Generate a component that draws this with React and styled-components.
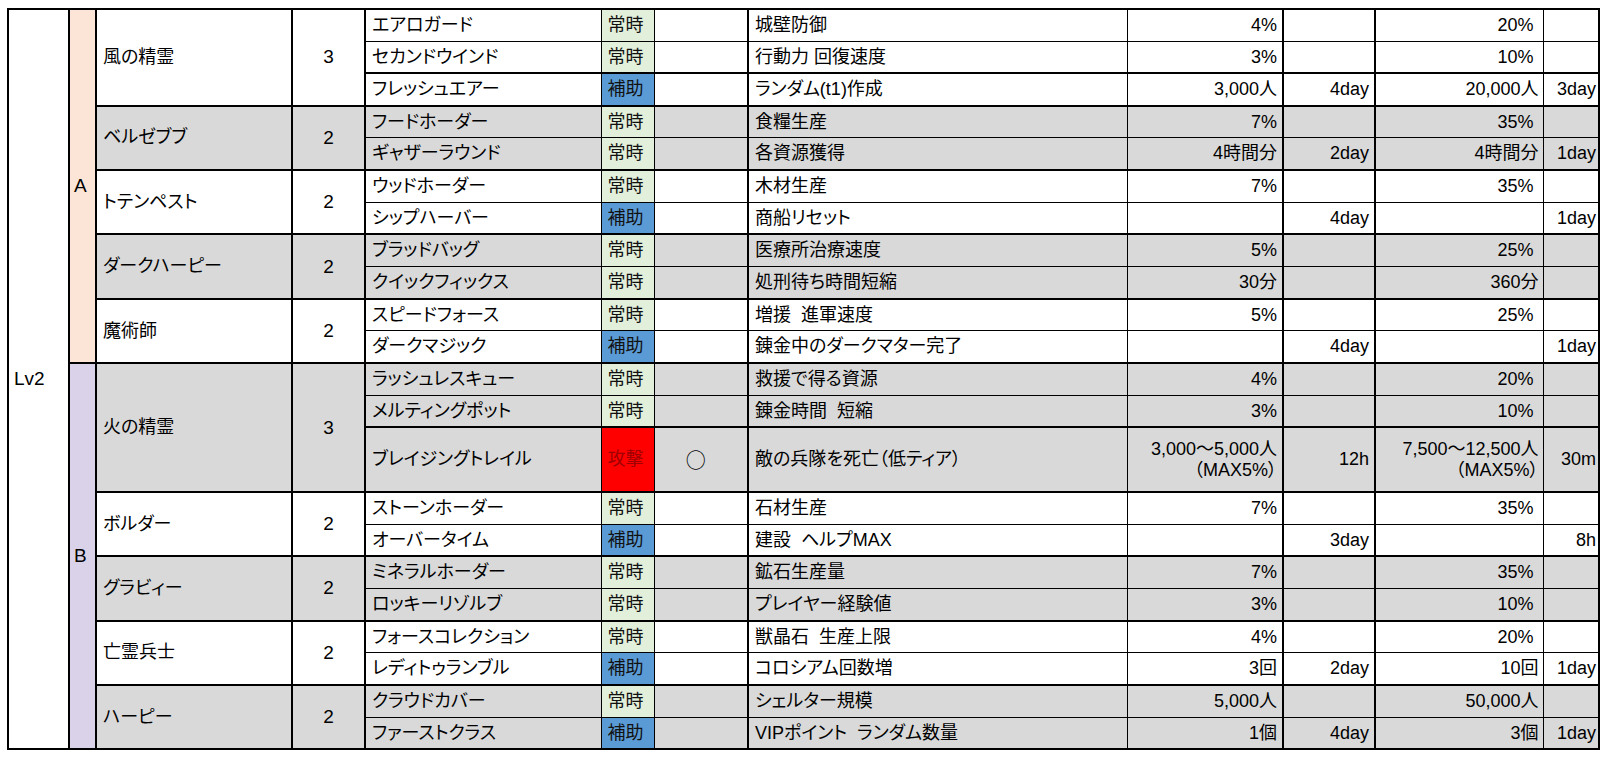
import React from 'react';
import styled, { createGlobalStyle } from 'styled-components';

const GlobalStyle = createGlobalStyle`
  html, body {
    margin: 0;
    padding: 0;
    background: #ffffff;
    overflow: hidden;
  }
  body { font-family: "Liberation Sans", "Noto Sans CJK JP", sans-serif; color: #000; }
`;

const Page = styled.div`
  box-sizing: border-box;
  width: 1603px;
  height: 758px;
  overflow: hidden;
  padding: 8px 0 0 7px;
`;

const Sheet = styled.table`
  border-collapse: collapse;
  table-layout: fixed;
  width: 1591px;
  font-family: "Liberation Sans", "Noto Sans CJK JP", sans-serif;
  font-size: 18px;
  font-feature-settings: "palt";
  color: #000;
  border: 2px solid #000;
`;

const Col = styled.col`
  width: ${(p) => p.$w}px;
`;

const Row = styled.tr`
  height: ${(p) => (p.$tall ? 64.4 : 32.2)}px;
`;

const BaseCell = styled.td`
  box-sizing: border-box;
  vertical-align: middle;
  white-space: pre;
  overflow: hidden;
  line-height: 1.15;
  padding: 0 5px;
  border-top: ${(p) => p.$top || 1}px solid #000;
  border-bottom: 1px solid #000;
  background: ${(p) => (p.$shade ? '#d9d9d9' : '#ffffff')};
`;

const LevelCell = styled(BaseCell)`
  border-right: 2px solid #000;
  background: #ffffff;
  text-align: left;
  padding-left: 5px;
  font-size: 19px;
`;

const ClassCell = styled(BaseCell)`
  border-left: 2px solid #000;
  border-right: 2px solid #000;
  border-top: 2px solid #000;
  background: ${(p) => (p.$kind === 'A' ? '#fce4d6' : '#d9d2e9')};
  text-align: left;
  padding: 0 0 0 4px;
  font-size: 19px;
`;

const NameCell = styled(BaseCell)`
  border-left: 2px solid #000;
  border-right: 2px solid #000;
  border-top: 2px solid #000;
  border-bottom: 2px solid #000;
  text-align: left;
  padding-left: 6px;
`;

const CountCell = styled(BaseCell)`
  border-left: 2px solid #000;
  border-right: 2px solid #000;
  border-top: 2px solid #000;
  border-bottom: 2px solid #000;
  text-align: center;
  font-size: 19px;
`;

const SkillCell = styled(BaseCell)`
  border-left: 2px solid #000;
  border-right: 1px solid #000;
  text-align: left;
  padding-left: 6px;
`;

const TYPE_BG = { 常時: '#e2efda', 補助: '#5b9bd5', 攻撃: '#ff0000' };
const TYPE_FG = { 常時: '#111111', 補助: '#111111', 攻撃: '#a00000' };

const TypeCell = styled(BaseCell)`
  border-left: 1px solid #000;
  border-right: 1px solid #000;
  background: ${(p) => TYPE_BG[p.$type]};
  color: ${(p) => TYPE_FG[p.$type]};
  text-align: left;
  padding: 0 0 0 6px;
`;

const MarkCell = styled(BaseCell)`
  border-left: 1px solid #000;
  border-right: 2px solid #000;
  text-align: center;
  padding: 0 10px 0 0;
  font-family: "Noto Sans CJK JP", sans-serif;
  font-size: 20px;
`;

const EffectCell = styled(BaseCell)`
  border-left: 2px solid #000;
  border-right: 1px solid #000;
  text-align: left;
  padding-left: 6px;
`;

const ValueCell = styled(BaseCell)`
  border-left: ${(p) => (p.$second ? 2 : 1)}px solid #000;
  border-right: ${(p) => (p.$second ? 1 : 2)}px solid #000;
  text-align: right;
  padding-right: ${(p) => p.$pad}px;
`;

const DurationCell = styled(BaseCell)`
  border-left: ${(p) => (p.$second ? 1 : 2)}px solid #000;
  border-right: 2px solid #000;
  text-align: right;
  padding-right: ${(p) => (p.$second ? 2 : 5)}px;
  padding-left: 0;
`;

const sk = (skill, type, effect, v1 = '', d1 = '', v2 = '', d2 = '', extra = {}) => ({
  skill, type, effect, v1, d1, v2, d2, ...extra,
});

const GROUPS = [
  {
    kind: 'A',
    chars: [
      {
        name: '風の精霊', count: '3', rows: [
          sk('エアロガード', '常時', '城壁防御', '4%', '', '20%', ''),
          sk('セカンドウインド', '常時', '行動力 回復速度', '3%', '', '10%', ''),
          sk('フレッシュエアー', '補助', 'ランダム(t1)作成', '3,000人', '4day', '20,000人', '3day', { top: 2 }),
        ],
      },
      {
        name: 'ベルゼブブ', count: '2', rows: [
          sk('フードホーダー', '常時', '食糧生産', '7%', '', '35%', ''),
          sk('ギャザーラウンド', '常時', '各資源獲得', '4時間分', '2day', '4時間分', '1day'),
        ],
      },
      {
        name: 'トテンペスト', count: '2', rows: [
          sk('ウッドホーダー', '常時', '木材生産', '7%', '', '35%', ''),
          sk('シップハーバー', '補助', '商船リセット', '', '4day', '', '1day'),
        ],
      },
      {
        name: 'ダークハーピー', count: '2', rows: [
          sk('ブラッドバッグ', '常時', '医療所治療速度', '5%', '', '25%', ''),
          sk('クイックフィックス', '常時', '処刑待ち時間短縮', '30分', '', '360分', ''),
        ],
      },
      {
        name: '魔術師', count: '2', rows: [
          sk('スピードフォース', '常時', '増援  進軍速度', '5%', '', '25%', ''),
          sk('ダークマジック', '補助', '錬金中のダークマター完了', '', '4day', '', '1day'),
        ],
      },
    ],
  },
  {
    kind: 'B',
    chars: [
      {
        name: '火の精霊', count: '3', rows: [
          sk('ラッシュレスキュー', '常時', '救援で得る資源', '4%', '', '20%', ''),
          sk('メルティングポット', '常時', '錬金時間  短縮', '3%', '', '10%', ''),
          sk('ブレイジングトレイル', '攻撃', '敵の兵隊を死亡（低ティア）',
            '3,000～5,000人\n（MAX5%）', '12h', '7,500～12,500人\n（MAX5%）', '30m',
            { tall: true, mark: '○', top: 2 }),
        ],
      },
      {
        name: 'ボルダー', count: '2', rows: [
          sk('ストーンホーダー', '常時', '石材生産', '7%', '', '35%', ''),
          sk('オーバータイム', '補助', '建設  ヘルプMAX', '', '3day', '', '8h'),
        ],
      },
      {
        name: 'グラビィー', count: '2', rows: [
          sk('ミネラルホーダー', '常時', '鉱石生産量', '7%', '', '35%', ''),
          sk('ロッキーリゾルブ', '常時', 'プレイヤー経験値', '3%', '', '10%', ''),
        ],
      },
      {
        name: '亡霊兵士', count: '2', rows: [
          sk('フォースコレクション', '常時', '獣晶石  生産上限', '4%', '', '20%', ''),
          sk('レディトゥランブル', '補助', 'コロシアム回数増', '3回', '2day', '10回', '1day'),
        ],
      },
      {
        name: 'ハーピー', count: '2', rows: [
          sk('クラウドカバー', '常時', 'シェルター規模', '5,000人', '', '50,000人', ''),
          sk('ファーストクラス', '補助', 'VIPポイント  ランダム数量', '1個', '4day', '3個', '1day'),
        ],
      },
    ],
  },
];

const COLS = [61, 27, 196, 73, 236, 53, 94, 379, 156, 92, 168, 56];

const TOTAL_ROWS = GROUPS.reduce(
  (s, g) => s + g.chars.reduce((t, c) => t + c.rows.length, 0),
  0,
);

// Percentages in the last value column sit a little further from the border.
const valuePad = (text, second) => {
  if (!second) return 5;
  return text.endsWith('%') ? 9 : 4;
};

function buildRows() {
  const out = [];
  let charIndex = 0;
  GROUPS.forEach((group, gi) => {
    const groupRows = group.chars.reduce((t, c) => t + c.rows.length, 0);
    group.chars.forEach((ch, ci) => {
      const shade = charIndex % 2 === 1;
      charIndex += 1;
      ch.rows.forEach((r, ri) => {
        const top = ri === 0 ? 2 : r.top || 1;
        out.push(
          <Row key={`${gi}-${ci}-${ri}`} $tall={r.tall}>
            {gi === 0 && ci === 0 && ri === 0 && (
              <LevelCell rowSpan={TOTAL_ROWS} $top={2}>Lv2</LevelCell>
            )}
            {ci === 0 && ri === 0 && (
              <ClassCell rowSpan={groupRows} $kind={group.kind}>{group.kind}</ClassCell>
            )}
            {ri === 0 && (
              <NameCell rowSpan={ch.rows.length} $shade={shade}>{ch.name}</NameCell>
            )}
            {ri === 0 && (
              <CountCell rowSpan={ch.rows.length} $shade={shade}>{ch.count}</CountCell>
            )}
            <SkillCell $shade={shade} $top={top}>{r.skill}</SkillCell>
            <TypeCell $type={r.type} $top={top}>{r.type}</TypeCell>
            <MarkCell $shade={shade} $top={top}>{r.mark || ''}</MarkCell>
            <EffectCell $shade={shade} $top={top}>{r.effect}</EffectCell>
            <ValueCell $shade={shade} $top={top} $pad={valuePad(r.v1, false)}>{r.v1}</ValueCell>
            <DurationCell $shade={shade} $top={top}>{r.d1}</DurationCell>
            <ValueCell $shade={shade} $top={top} $second $pad={valuePad(r.v2, true)}>{r.v2}</ValueCell>
            <DurationCell $shade={shade} $top={top} $second>{r.d2}</DurationCell>
          </Row>,
        );
      });
    });
  });
  return out;
}

export default function App() {
  return (
    <>
      <GlobalStyle />
      <Page>
        <Sheet>
          <colgroup>
            {COLS.map((w, i) => (
              <Col key={i} $w={w} />
            ))}
          </colgroup>
          <tbody>{buildRows()}</tbody>
        </Sheet>
      </Page>
    </>
  );
}
